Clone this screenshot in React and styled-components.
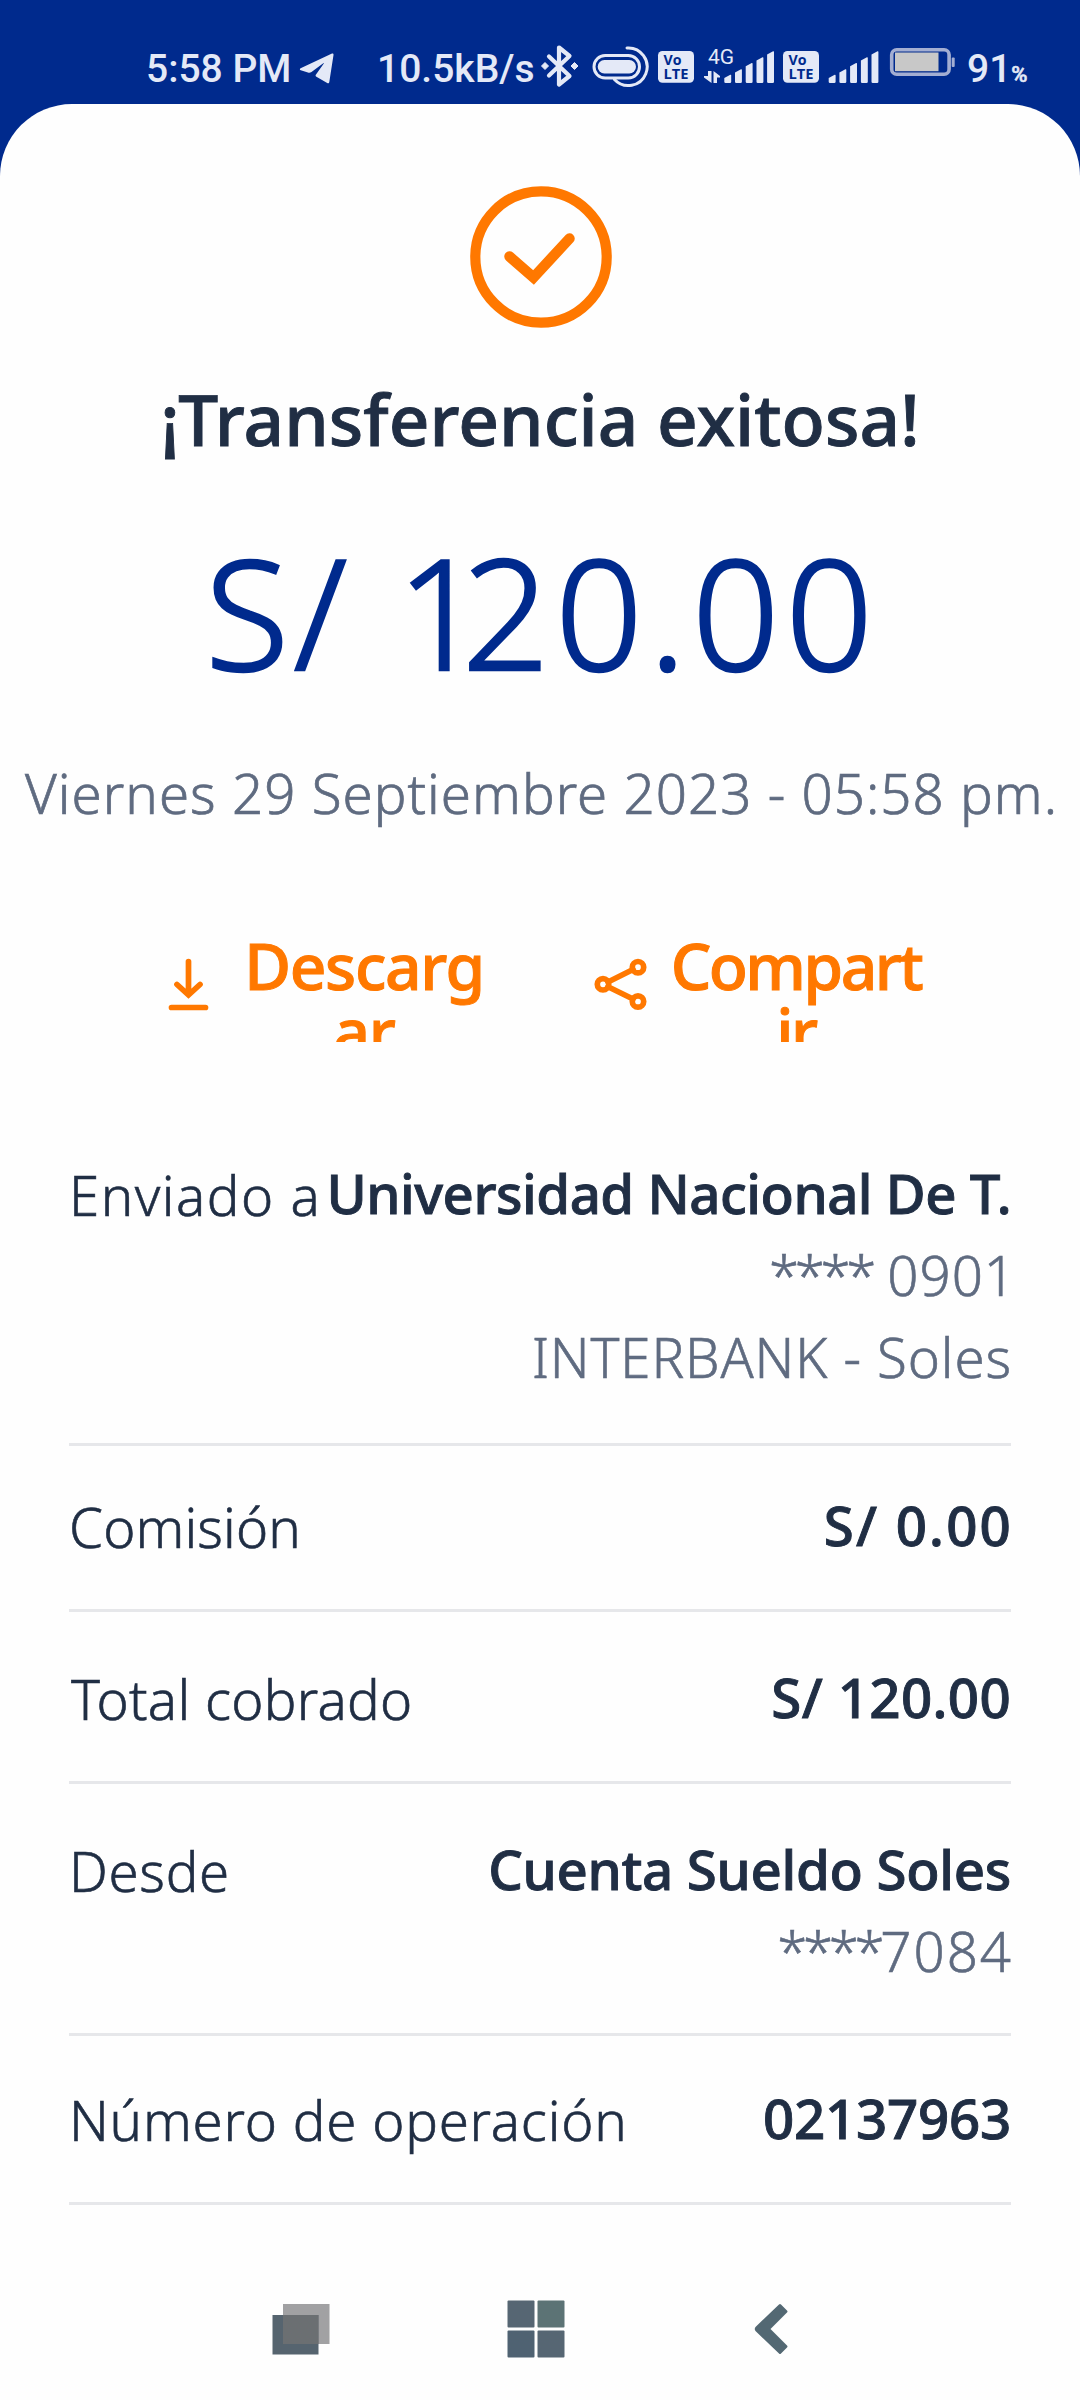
import React from 'react'
import styled, { createGlobalStyle } from 'styled-components'

const voucher = [
    {
        label: 'Enviado a', labelSpacing: 1.5, top: 0, height: 295,
        value: 'Universidad Nacional De T.', spacing: -0.5,
        details: [
            { mask: '****', text: ' 0901', spacing: 1, shift: 5 },
            { text: 'INTERBANK - Soles', spacing: 0.9, shift: 1 },
        ],
    },
    { label: 'Comisión', labelSpacing: 0.15, top: 37, height: 166, value: 'S/ 0.00', spacing: 2.2, shift: 2 },
    { label: 'Total cobrado', labelSpacing: 0.3, indent: 2, top: 43, height: 172, value: 'S/ 120.00', spacing: 0.38 },
    {
        label: 'Desde', labelSpacing: 0.7, top: 43, height: 252,
        value: 'Cuenta Sueldo Soles', spacing: -0.3,
        details: [{ mask: '****', text: '7084', spacing: 2, shift: 2 }],
    },
    { label: 'Número de operación', labelSpacing: 0.8, top: 40, height: 169, value: '02137963', spacing: -0.23 },
];

const bars = [
    [0, 23.5], [10.7, 18], [21.4, 11.7], [32.2, 6], [42.8, 0],
];

function TelegramIcon() {
    return (
        <Glyph $left={8} width="36" height="46" viewBox="0 0 36 46">
            <path d="M1.600 24.200 33 9.600c1-.4 1.700.2 1.500 1.300l-4.200 27c-.2 1.300-1.100 1.600-2.100 1L17.400 32.700c-1-.6-1-1.500-.4-2.300L24.800 19.600c.2-.4-.1-.6-.5-.4L12.500 28c-1.200.8-2.300.9-3.600.5L1.800 26.300c-1.200-.4-1.200-1.500-.2-2.100Z" />
        </Glyph>
    )
}

function BluetoothIcon() {
    return (
        <Glyph $left={4} width="40" height="46" viewBox="0 0 40 46">
            <path d="M9 12.500 29.500 32 19 40.500V3.500L29.500 12 9 31.500" fill="none" stroke="#e4e9f7" strokeWidth="4.200" strokeLinecap="round" strokeLinejoin="round" />
            <path d="M5 18.500 8.500 22 5 25.500 1.500 22ZM34.500 18.500 38 22 34.500 25.500 31 22Z" stroke="#e4e9f7" strokeLinejoin="round" />
        </Glyph>
    )
}

function CapsuleIcon() {
    return (
        <Glyph $left={10} width="61" height="46" viewBox="0 0 61 46">
            <rect x="4" y="11.500" width="45.500" height="22.500" rx="11.200" fill="none" stroke="#e4e9f7" strokeWidth="3" />
            <rect x="7.700" y="16" width="38.300" height="13.500" rx="6.700" />
            <path d="M37 4A18.800 18.800 0 1 1 24.500 35.500" fill="none" stroke="#e4e9f7" strokeWidth="3" strokeLinecap="round" />
        </Glyph>
    )
}

function VolteIcon({ left }) {
    return (
        <Glyph $left={left} width="38" height="46" viewBox="0 0 38 46">
            <rect x="1" y="7" width="36" height="31.700" rx="4.500" />
            <BadgeText x="6.500" y="21.300" textLength="18" lengthAdjust="spacingAndGlyphs">Vo</BadgeText>
            <BadgeText x="6.500" y="35" textLength="25" lengthAdjust="spacingAndGlyphs">LTE</BadgeText>
        </Glyph>
    )
}

function SignalBars({ x }) {
    return bars.map(([dx, top]) => (
        <path key={dx} d={`M${x + dx} ${top + 10.500} l6 -3.200 q.9 -.3 .9 .7 V37.700 q0 1.300 -1.300 1.300 h-4.300 q-1.300 0 -1.300 -1.300Z`} />
    ))
}

function BatteryIcon() {
    return (
        <Glyph $left={8} width="67" height="46" viewBox="0 0 67 46">
            <rect x="2.700" y="5.700" width="57.400" height="24.600" rx="5" fill="none" stroke="#a3aed2" strokeWidth="3.600" />
            <rect x="6" y="8.500" width="43.500" height="18.700" fill="#c8c8c8" />
            <rect x="62.700" y="13.500" width="3" height="9.500" rx="1" fill="#a3aed2" />
        </Glyph>
    )
}

function StatusBar() {
    return (
        <Status>
            <Clock>5:58 PM</Clock>
            <TelegramIcon />
            <Speed>10.5kB/s</Speed>
            <BluetoothIcon />
            <CapsuleIcon />
            <VolteIcon left={6} />
            <Glyph $left={8} width="72" height="46" viewBox="0 0 72 46">
                <NetworkText x="5" y="20.300">4G</NetworkText>
                <path d="M5 27h3.500v12L1 33.500v-1.500h4ZM10.500 39V27l6.500 5v1.500h-3V39Z" />
                <SignalBars x={21.300} />
            </Glyph>
            <VolteIcon left={7} />
            <Glyph $left={7} width="54" height="46" viewBox="0 0 54 46">
                <SignalBars x={1.700} />
            </Glyph>
            <BatteryIcon />
            <Battery>91<small>%</small></Battery>
        </Status>
    )
}

function Row({ row }) {
    return (
        <RowBox $top={row.top} $height={row.height}>
            <Label $spacing={row.labelSpacing} $indent={row.indent}>{row.label}</Label>
            <Values>
                <Value $spacing={row.spacing} $shift={row.shift}>{row.value}</Value>
                {row.details && row.details.map(d => (
                    <Detail key={d.text} $spacing={d.spacing} $shift={d.shift}>
                        {d.mask && <Kern $by={-4.3}>{d.mask}</Kern>}{d.text}
                    </Detail>
                ))}
            </Values>
        </RowBox>
    )
}

export default function App() {
    return <>
        <GlobalStyle />
        <Screen>
            <StatusBar />
            <Sheet>
                <CheckIcon width="142" height="142" viewBox="0 0 142 142">
                    <circle cx="71" cy="71" r="65.700" strokeWidth="10.200" />
                    <path d="M39.500 70.500 63.500 91.500 99.500 52.500" strokeWidth="10.500" strokeLinecap="round" />
                </CheckIcon>
                <Title>¡Transferencia exitosa!</Title>
                <Amount><Kern $by={5}>S/ </Kern><Kern $by={-22}>1</Kern>20.00</Amount>
                <DateText>Viernes 29 Septiembre 2023 - 05:58 pm.</DateText>
                <Actions>
                    <Action>
                        <ActionIcon width="41" height="54" viewBox="0 0 41 54">
                            <path d="M20.500 3.500V36M9 26.500 20.500 37 32 26.500M3.500 49.500H37.500" />
                        </ActionIcon>
                        <ActionText $left={29} $width={252} $spacing={-1.3}>Descargar</ActionText>
                    </Action>
                    <Action>
                        <ActionIcon width="54" height="54" viewBox="0 0 54 54">
                            <circle cx="9" cy="26.300" r="5.700" />
                            <circle cx="44" cy="9.200" r="5.700" />
                            <circle cx="44" cy="43.500" r="5.700" />
                            <path d="M14 24 39 11.500M14 28.700 39 41" />
                        </ActionIcon>
                        <ActionText $left={21} $width={254} $spacing={-2.5}>Compartir</ActionText>
                    </Action>
                </Actions>
                <Rows>
                    {voucher.map(row => <Row key={row.label} row={row} />)}
                </Rows>
                <NavBar>
                    <svg width="58" height="58" viewBox="0 0 58 58">
                        <rect x=".5" y="15" width="46" height="39.500" fill="#56646f" />
                        <rect x="11" y="4" width="46.500" height="40" fill="#808083" fillOpacity=".74" />
                        <rect x="11" y="15" width="35.500" height="29" fill="#6b6f72" />
                    </svg>
                    <svg width="58" height="58" viewBox="0 0 58 58">
                        <rect x=".5" y=".5" width="27" height="27" rx="1" fill="#566673" />
                        <rect x="30.500" y=".5" width="27" height="27" rx="1" fill="#5c7375" />
                        <rect x=".5" y="30.500" width="27" height="27" rx="1" fill="#4f6272" />
                        <rect x="30.500" y="30.500" width="27" height="27" rx="1" fill="#566673" />
                    </svg>
                    <svg width="34" height="58" viewBox="0 0 34 58">
                        <path d="M25 4.500Q26 3.500 27 4.500L33 10.500Q34 11.500 33 12.500L16.500 29 33 45.500Q34 46.500 33 47.500L27 53.500Q26 54.500 25 53.500L1.500 31Q0 29 1.500 27Z" fill="#536873" />
                    </svg>
                </NavBar>
            </Sheet>
        </Screen>
    </>
}

const GlobalStyle = createGlobalStyle`
    body {
        margin: 0;
        background: #fefefe;
        font-family: "Noto Sans", sans-serif;
    }
    svg {
        display: block;
        flex: none;
    }
`;

const Screen = styled.div`
    width: 1080px;
    height: 2400px;
    overflow: hidden;
    background: #002a8d;
`;

const Status = styled.div`
    display: flex;
    align-items: flex-start;
    box-sizing: border-box;
    height: 104px;
    padding: 44px 0 0 146px;
    color: #e4e9f7;
    font-family: Roboto, sans-serif;
    font-size: 39px;
    font-weight: 500;
    line-height: 50px;
    white-space: nowrap;
`;

const Glyph = styled.svg`
    margin-left: ${p => p.$left}px;
    fill: #e4e9f7;
`;

const BadgeText = styled.text`
    fill: #002a8d;
    font-family: "Open Sans", sans-serif;
    font-size: 14px;
    font-weight: 700;
`;

const NetworkText = styled.text`
    font-size: 21px;
    font-weight: 400;
`;

const Clock = styled.div`
    width: 145px;
`;

const Speed = styled.div`
    width: 159px;
    margin-left: 42px;
`;

const Battery = styled.div`
    margin-left: 11px;
    small {
        font-size: 22px;
        -webkit-text-stroke: 0.6px #e4e9f7;
    }
`;

const Sheet = styled.div`
    display: flex;
    flex-direction: column;
    align-items: center;
    box-sizing: border-box;
    height: 2296px;
    padding-top: 81.5px;
    border-radius: 72px 72px 0 0;
    background: #fefefe;
`;

const CheckIcon = styled.svg`
    fill: none;
    stroke: #ff7800;
    margin-left: 2px;
`;

const Kern = styled.span`
    letter-spacing: ${p => p.$by}px;
`;

const Title = styled.h1`
    margin: 43px 0 0;
    color: #202e44;
    font-size: 71px;
    font-weight: 500;
    line-height: 96px;
    letter-spacing: 0.07px;
    white-space: nowrap;
    -webkit-text-stroke: 0.9px #202e44;
`;

const Amount = styled.div`
    margin: 54px 0 0 4px;
    color: #002a8d;
    font-size: 153px;
    font-weight: 300;
    line-height: 180px;
    letter-spacing: 6px;
    white-space: nowrap;
    -webkit-text-stroke: 2.4px #002a8d;
`;

const DateText = styled.div`
    margin: 55px 0 0 3px;
    color: #5f6b80;
    font-size: 54.6px;
    font-weight: 300;
    line-height: 74px;
    letter-spacing: 1.05px;
    white-space: nowrap;
    -webkit-text-stroke: 0.7px #5f6b80;
`;

const Actions = styled.div`
    display: flex;
    gap: 104px;
    align-self: stretch;
    box-sizing: border-box;
    height: 116px;
    margin-top: 96px;
    padding: 7px 0 0 168px;
    overflow: hidden;
`;

const Action = styled.div`
    display: flex;
`;

const ActionIcon = styled.svg`
    margin-top: 25px;
    fill: none;
    stroke: #ff7800;
    stroke-width: 5.7px;
    stroke-linecap: round;
`;

const ActionText = styled.div`
    width: ${p => p.$width}px;
    margin-left: ${p => p.$left}px;
    color: #ff7800;
    font-size: 64px;
    font-weight: 500;
    line-height: 65px;
    letter-spacing: ${p => p.$spacing}px;
    text-align: center;
    word-break: break-all;
    -webkit-text-stroke: 1px #ff7800;
`;

const Rows = styled.div`
    align-self: stretch;
    margin: 109px 69px 0;
`;

const RowBox = styled.div`
    display: flex;
    justify-content: space-between;
    box-sizing: border-box;
    height: ${p => p.$height}px;
    padding-top: ${p => p.$top}px;
    border-bottom: 3px solid #e6e7ea;
    font-size: 54.6px;
    line-height: 82.4px;
    white-space: nowrap;
`;

const Label = styled.div`
    margin: 3px 0 0 ${p => p.$indent || 0}px;
    color: #202e44;
    font-weight: 300;
    letter-spacing: ${p => p.$spacing}px;
    -webkit-text-stroke: 0.6px #202e44;
`;

const Values = styled.div`
    display: flex;
    flex-direction: column;
    align-items: flex-end;
    flex: 1;
    width: 0;
    margin-top: 1px;
`;

const Value = styled.div`
    margin-right: ${p => -(p.$shift || 0)}px;
    color: #202e44;
    font-weight: 500;
    letter-spacing: ${p => p.$spacing}px;
    -webkit-text-stroke: 0.9px #202e44;
`;

const Detail = styled.div`
    margin-right: ${p => -(p.$shift || 0)}px;
    color: #5f6b80;
    font-weight: 300;
    letter-spacing: ${p => p.$spacing}px;
    white-space: pre;
    -webkit-text-stroke: 0.6px #5f6b80;
`;

const NavBar = styled.div`
    display: flex;
    align-self: stretch;
    margin-top: 95px;
    padding-left: 272px;
    svg + svg {
        margin-left: 177px;
    }
    svg:last-child {
        margin-left: 189px;
    }
`;
